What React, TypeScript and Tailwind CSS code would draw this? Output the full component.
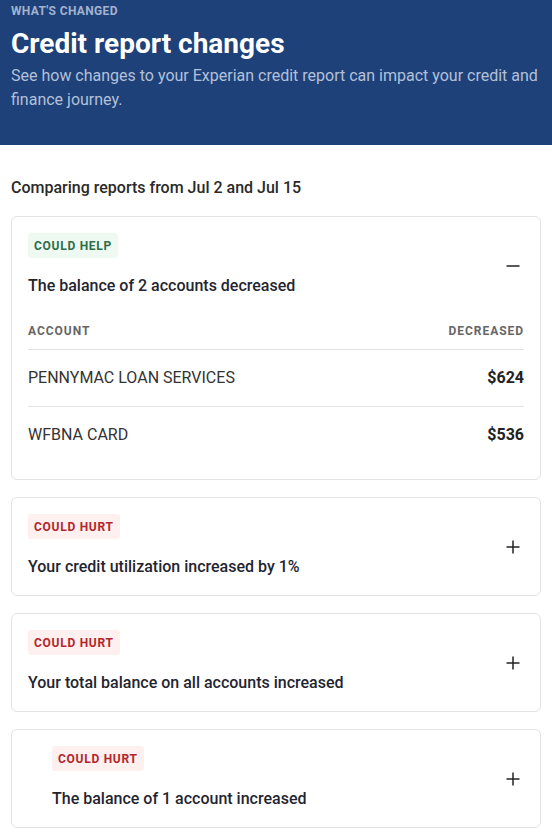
import type { ReactNode } from "react";

type Tone = "help" | "hurt";

const badgeStyles: Record<Tone, string> = {
  help: "bg-[#eefaf1] text-[#2f6e48]",
  hurt: "bg-[#fdf0ef] text-[#b3262c]",
};

function Badge({ tone, children }: { tone: Tone; children: ReactNode }) {
  return (
    <span
      className={`inline-flex h-[25px] items-center rounded-[3px] px-[6px] text-[12px] font-bold leading-none tracking-[0.06em] ${badgeStyles[tone]}`}
    >
      {children}
    </span>
  );
}

function Toggle({ open }: { open: boolean }) {
  return (
    <svg width="16" height="16" viewBox="0 0 16 16" className="shrink-0 text-[#222]">
      <path d="M1.5 8h13" stroke="currentColor" strokeWidth="1.5" />
      {!open && <path d="M8 1.5v13" stroke="currentColor" strokeWidth="1.5" />}
    </svg>
  );
}

interface CardProps {
  tone: Tone;
  label: string;
  title: string;
  open?: boolean;
  indent?: boolean;
  children?: ReactNode;
}

function ChangeCard({ tone, label, title, open = false, indent = false, children }: CardProps) {
  return (
    <div className="rounded-[6px] border border-[#e3e3e3] bg-white">
      <div className={`flex items-center justify-between pr-[19px] pt-4 pb-[16px] ${indent ? "pl-10" : "pl-4"}`}>
        <div className="flex flex-col items-start">
          <Badge tone={tone}>{label}</Badge>
          <h3 className="mt-4 text-[16px] font-medium leading-6 text-[#1f2530]">{title}</h3>
        </div>
        <Toggle open={open} />
      </div>
      {children}
    </div>
  );
}

const accounts = [
  { name: "PENNYMAC LOAN SERVICES", amount: "$624" },
  { name: "WFBNA CARD", amount: "$536" },
];

export default function App() {
  return (
    <div className="min-h-[840px] bg-white font-['Roboto',sans-serif]">
      {/* Header */}
      <div className="bg-[#1e4179] px-[11px] pt-[3px] pb-[33px]">
        <p className="text-[12px] font-bold leading-4 tracking-[0.03em] text-[#a3b3cf]">WHAT'S CHANGED</p>
        <h1 className="mt-[9px] text-[28px] font-bold leading-8 text-white">Credit report changes</h1>
        <p className="mt-1 text-[16px] leading-6 text-[#b3c0d9]">
          See how changes to your Experian credit report can impact your credit and finance journey.
        </p>
      </div>

      <div className="px-[11px] pt-[33px]">
        <p className="text-[16px] font-medium leading-5 text-[#2a2a2a]">Comparing reports from Jul 2 and Jul 15</p>

        <div className="mt-[18px] flex flex-col gap-[17px]">
          <ChangeCard tone="help" label="COULD HELP" title="The balance of 2 accounts decreased" open>
            <div className="mt-[9px] px-4 pb-4">
              <div className="flex justify-between border-b border-[#e3e3e3] pb-[10px] text-[12px] font-bold leading-4 tracking-[0.08em] text-[#666]">
                <span>ACCOUNT</span>
                <span>DECREASED</span>
              </div>
              {accounts.map((a, i) => (
                <div
                  key={a.name}
                  className={`flex items-center justify-between py-4 text-[16px] leading-6 ${i < accounts.length - 1 ? "border-b border-[#e3e3e3]" : ""}`}
                >
                  <span className="text-[#333]">{a.name}</span>
                  <span className="font-bold text-[#222]">{a.amount}</span>
                </div>
              ))}
            </div>
          </ChangeCard>

          <ChangeCard tone="hurt" label="COULD HURT" title="Your credit utilization increased by 1%" />
          <ChangeCard tone="hurt" label="COULD HURT" title="Your total balance on all accounts increased" />
          <ChangeCard tone="hurt" label="COULD HURT" title="The balance of 1 account increased" indent />
        </div>
      </div>
    </div>
  );
}
